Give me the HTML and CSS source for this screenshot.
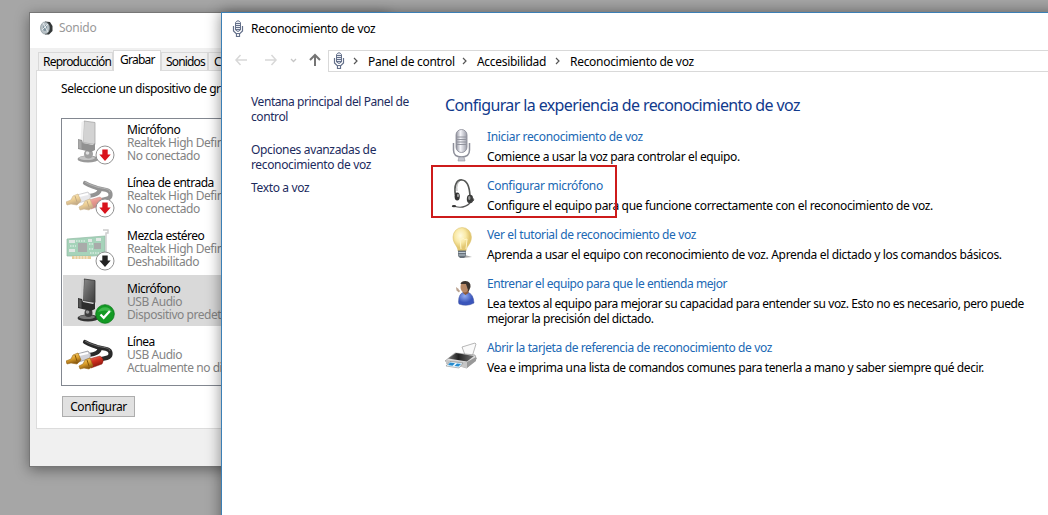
FILE: index.html
```html
<!DOCTYPE html>
<html lang="es">
<head>
<meta charset="utf-8">
<title>Reconocimiento de voz</title>
<link rel="stylesheet" href="styles.css">
</head>
<body>
<svg class="defs" aria-hidden="true">
  <defs>
    <linearGradient id="silver" x1="0" x2="1"><stop offset="0" stop-color="#8d8f9a"/><stop offset=".4" stop-color="#f5f5fa"/><stop offset="1" stop-color="#9b9da8"/></linearGradient>
    <linearGradient id="panel" x1="0" y1="0" x2="1" y2="1"><stop offset="0" stop-color="#8a8a8a"/><stop offset="1" stop-color="#3c3c3c"/></linearGradient>
    <linearGradient id="gold" x1="0" y1="0" x2=".4" y2="1"><stop offset="0" stop-color="#ffe48a"/><stop offset=".6" stop-color="#dda02b"/><stop offset="1" stop-color="#8a5a12"/></linearGradient>
    <linearGradient id="red" x1="0" y1="0" x2=".4" y2="1"><stop offset="0" stop-color="#f0806c"/><stop offset=".5" stop-color="#cf2f1f"/><stop offset="1" stop-color="#86150d"/></linearGradient>
    <radialGradient id="bulb" cx=".4" cy=".35"><stop offset="0" stop-color="#fffbe0"/><stop offset=".6" stop-color="#f9e9a6"/><stop offset="1" stop-color="#e3c872"/></radialGradient>
    <radialGradient id="shirt" cx=".4" cy=".3"><stop offset="0" stop-color="#93acef"/><stop offset="1" stop-color="#3a55bb"/></radialGradient>
    <linearGradient id="inktop" x1="0" y1="0" x2="1" y2="0"><stop offset="0" stop-color="#777"/><stop offset=".4" stop-color="#222"/><stop offset="1" stop-color="#777"/></linearGradient>
    <symbol id="mic" viewBox="0 0 56 51">
      <ellipse cx="22" cy="43" rx="10.500" ry="3.600" fill="#333"/><ellipse cx="21" cy="42" rx="8" ry="2" fill="#777"/>
      <circle cx="22.500" cy="38" r="4" fill="#3c3c3c"/><circle cx="21.500" cy="37" r="1.800" fill="#999"/>
      <path d="M18 4l11 1.500v22l-12-2z" fill="url(#panel)" stroke="#333" stroke-width=".8"/>
      <path d="M18 4l-2.500 1-1 21 2.500 1z" fill="#d0d0d0"/>
      <path d="M12 23l4 1 1 3 10 2 2-2v7l-4 2-13-3z" fill="#2c2c2c"/><path d="M12.500 24l3 1v8l-3-1z" fill="#555"/>
    </symbol>
    <symbol id="pale-mic" viewBox="0 0 56 51">
      <ellipse cx="22" cy="43" rx="10.500" ry="3.600" fill="#999"/><ellipse cx="21" cy="42" rx="8" ry="2" fill="#c4c4c4"/>
      <circle cx="22.500" cy="38" r="4.500" fill="#a0a0a0"/><circle cx="21.500" cy="37" r="1.800" fill="#e0e0e0"/>
      <path d="M18 5l11 1.500v22l-12-2z" fill="#d3d3d3" stroke="#a7a7a7" stroke-width=".8"/><path d="M18 5l-2.500 1-1 20 2.500 1z" fill="#f0f0f0"/>
      <path d="M12 23l4 1 1 3 10 2 2-2v7l-4 2-13-3z" fill="#919191"/><path d="M12.500 24l3 1v8l-3-1z" fill="#aaa"/>
    </symbol>
    <symbol id="rca" viewBox="0 0 56 51">
      <path d="M19 14c5 3 7 3 12 5 7 2 13 1 13.500 6 .5 5-4 5-9 6" fill="none" stroke="#292929" stroke-width="4.200" stroke-linecap="round"/>
      <path d="M34 20c-1 5-5 6-11 7" fill="none" stroke="#292929" stroke-width="4.200"/>
      <path d="M19 13c5 3 7 3 12 5 7 2 12 1 13 5" fill="none" stroke="#6a6a6a" stroke-width="1"/>
      <path d="M11 26l11-3q4 3 2 7l-11 4z" fill="#d2d2d8" stroke="#8c8c92" stroke-width=".7"/><path d="M13 27l9-2" stroke="#fff" stroke-width="2"/>
      <path d="M7 27l5-2 3 7-4 4-6-1-4 1-1-3 5-2z" fill="url(#gold)" stroke="#9b6818" stroke-width=".6"/>
      <path d="M23 31l11-3q5 3 2 8l-11 4z" fill="url(#red)" stroke="#8d1c12" stroke-width=".5"/>
      <path d="M19 32l5-2 3 8-4 3-5-1-4 1-1-3 4-2z" fill="url(#gold)" stroke="#9b6818" stroke-width=".6"/>
      <path d="M9 27l2 6M21 32l2 6" stroke="#865709" stroke-width="1"/>
    </symbol>
    <symbol id="card" viewBox="0 0 56 51">
      <path d="M1 17l38-3v19l-12 1H1z" fill="#50a878" stroke="#26754a" stroke-width=".7"/>
      <path d="M6 34h19v3H6z" fill="#d19c38"/><path d="M9 34v3m3-3v3m3-3v3m3-3v3m3-3v3" stroke="#fff" stroke-width=".7"/>
      <path d="M12 21h9v9h-9zM28 21h7v6h-7z" fill="#555a58"/><path d="M3 18h6v3H3zM22 17h4v3h-4zM30 16h5v3h-5zM3 27h6v3H3z" fill="#c4d0ca"/>
      <path d="M4 24h6m13-2h4m-4 5h4M10 19h9m5 12h12" stroke="#e0f5ea" stroke-width="1" stroke-dasharray="1.500 1"/>
      <path d="M37 8h5v3h-2v22" fill="none" stroke="#999" stroke-width="1.400"/>
    </symbol>
    <symbol id="arrow-badge" viewBox="0 0 20 20">
      <circle cx="10" cy="10" r="9" fill="#fff" stroke="#929292" stroke-width="1"/>
      <path d="M7.300 4.500h5.400v5h3L10 16 4.300 9.500h3z" fill="currentColor"/>
    </symbol>
    <symbol id="ok-badge" viewBox="0 0 20 20">
      <circle cx="10" cy="10" r="9.300" fill="#139a24" stroke="#0c7a1a" stroke-width=".8"/><path d="M3 8a7.500 7.500 0 0 1 14 0q-7-3-14 0" fill="#3eb84b"/>
      <path d="M5.500 10.500l3.200 3.300 6.200-6.800" fill="none" stroke="#fff" stroke-width="2.300"/>
    </symbol>
    <symbol id="mini-mic" viewBox="0 0 12 18">
      <path d="M3.500 2.500q2.500-3.500 5 0v7.500q-2.500 3-5 0z" fill="#e8ebf2" stroke="#64708a"/>
      <path d="M3.500 3.500h5m-5 2h5m-5 2h5m-5 2h5" stroke="#64708a"/>
      <path d="M1.500 6v5l2.500 2.500h4l2.500-2.500V6M4.500 14v2.500h3V14" fill="none" stroke="#64708a" stroke-width="1.200"/>
    </symbol>
  </defs>
</svg>

<section class="window sound">
  <header class="sound-title">
    <svg width="14" height="16" viewBox="0 0 14 16"><path d="M5 1.500l5 .5 2.500 4v5L9 14.500H5z" fill="#343838"/><ellipse cx="5" cy="8" rx="4.500" ry="6" fill="#b8c1c6" stroke="#88959b" stroke-width=".7"/><ellipse cx="5" cy="8" rx="2" ry="3" fill="#8095a0"/><path d="M3 3l5 9M2 10l6-6" stroke="#e4eaed"/></svg>
    <span>Sonido</span>
  </header>
  <nav class="tabs"><span class="tab t1">Reproducción</span><span class="tab active">Grabar</span><span class="tab t3">Sonidos</span><span class="tab t4">Comunicaciones</span></nav>
  <div class="tab-page">
    <p class="prompt">Seleccione un dispositivo de grabación</p>
    <ul class="devices">
      <li><div class="device-icon"><svg class="picture"><use href="#pale-mic"/></svg><svg class="badge down"><use href="#arrow-badge"/></svg></div><div><b>Micrófono</b><span>Realtek High Definition</span><span>No conectado</span></div></li>
      <li><div class="device-icon"><svg class="picture faded"><use href="#rca"/></svg><svg class="badge down"><use href="#arrow-badge"/></svg></div><div><b>Línea de entrada</b><span>Realtek High Definition</span><span>No conectado</span></div></li>
      <li><div class="device-icon"><svg class="picture faded"><use href="#card"/></svg><svg class="badge off"><use href="#arrow-badge"/></svg></div><div><b>Mezcla estéreo</b><span>Realtek High Definition</span><span>Deshabilitado</span></div></li>
      <li class="selected"><div class="device-icon"><svg class="picture"><use href="#mic"/></svg><svg class="badge"><use href="#ok-badge"/></svg></div><div><b>Micrófono</b><span>USB Audio</span><span>Dispositivo predeterminado</span></div></li>
      <li><div class="device-icon"><svg class="picture"><use href="#rca"/></svg></div><div><b>Línea</b><span>USB Audio</span><span>Actualmente no disponible</span></div></li>
    </ul>
    <button class="configure">Configurar</button>
  </div>
</section>

<section class="window speech">
  <header class="speech-title"><svg width="12" height="18"><use href="#mini-mic"/></svg><span>Reconocimiento de voz</span></header>
  <div class="toolbar">
    <svg class="nav" viewBox="0 0 90 20" fill="none"><path d="M13 10H2m4.500-5L2 10l4.500 5M31 10h11m-4.500-5l4.500 5-4.500 5" stroke="#d8d8d8" stroke-width="1.500"/><path d="M57 9l2.500 2.500L62 9" stroke="#c6c6c6" stroke-width="1.300"/><path d="M81 16V5m-5 5l5-5 5 5" stroke="#757575" stroke-width="2"/></svg>
    <div class="address">
      <svg width="12" height="18"><use href="#mini-mic"/></svg>
      <svg class="chev c0" viewBox="0 0 5 8"><path d="M1 1l3 3-3 3"/></svg><span class="a1">Panel de control</span>
      <svg class="chev" viewBox="0 0 5 8"><path d="M1 1l3 3-3 3"/></svg><span class="a2">Accesibilidad</span>
      <svg class="chev" viewBox="0 0 5 8"><path d="M1 1l3 3-3 3"/></svg><span class="a3">Reconocimiento de voz</span>
    </div>
  </div>
  <div class="content">
    <aside><a>Ventana principal del Panel de<br>control</a><a>Opciones avanzadas de<br>reconocimiento de voz</a><a>Texto a voz</a></aside>
    <main>
      <h1>Configurar la experiencia de reconocimiento de voz</h1>
      <article class="start">
        <svg viewBox="0 0 34 38"><path d="M8.500 17v7q0 7 8 7t8-7v-7M16.500 31v4" fill="none" stroke="#8e909b" stroke-width="1.500"/><path d="M14 31h5l1 4h-7z" fill="#c4c6cf" stroke="#8e909b" stroke-width=".6"/><rect x="11" y="3.500" width="11" height="23" rx="5.500" fill="url(#silver)" stroke="#858793" stroke-width=".8"/><path d="M11.500 11h10M11.500 13.500h10M11.500 16h10M11.500 18.500h10" stroke="#92949e"/></svg>
        <div><a>Iniciar reconocimiento de voz</a><p>Comience a usar la voz para controlar el equipo.</p></div>
      </article>
      <article class="setup">
        <svg viewBox="0 0 34 38"><path d="M10.500 20C8.500 10 12 4.500 17 5c5.500.5 7.500 7 8 16" fill="none" stroke="#555755" stroke-width="1.700"/><path d="M12 16q-1-8 3-10" fill="none" stroke="#999" stroke-width=".8"/><ellipse cx="12.200" cy="21.500" rx="2.600" ry="4" fill="#333"/><ellipse cx="13" cy="20.500" rx="1" ry="1.700" fill="#a4a4a4"/><ellipse cx="25" cy="24" rx="3.200" ry="4.300" fill="#3a3b3a"/><ellipse cx="24.300" cy="23" rx="1.200" ry="2" fill="#999"/><path d="M27 22l2 3-3 2.500" fill="none" stroke="#555"/><path d="M25 28q-6 6-15 3.500" fill="none" stroke="#555" stroke-width="1.200"/><ellipse cx="9" cy="31.200" rx="2.200" ry="1.100" fill="#333"/></svg>
        <div><a>Configurar micrófono</a><p>Configure el equipo para que funcione correctamente con el reconocimiento de voz.</p></div>
      </article>
      <article class="tutorial">
        <svg viewBox="0 0 34 38"><path d="M18 34l9-1-7-2z" fill="#aaa"/><path d="M13 27c0-5-5-7-5-14a9.200 9.500 0 0 1 18.400 0c0 7-5 9-5.400 14z" fill="url(#bulb)" stroke="#d9bc63" stroke-width=".5"/><path d="M16 25l-1-10q2 2 3-1 1 3 4 1l-1 10" fill="none" stroke="#fff6c9" stroke-width="1"/><path d="M13 26.500h8V32l-2 2h-4l-2-2z" fill="#68727b"/><path d="M13.500 28.500h7m-7 2.500h7" stroke="#bfcbd4"/></svg>
        <div><a>Ver el tutorial de reconocimiento de voz</a><p>Aprenda a usar el equipo con reconocimiento de voz. Aprenda el dictado y los comandos básicos.</p></div>
      </article>
      <article class="train">
        <svg viewBox="0 0 34 38"><path d="M13.500 29q0-9 6-10h3q6 2 6.500 11-7 4-15 1z" fill="url(#shirt)" stroke="#3c50a0" stroke-width=".5"/><path d="M18 17h5.500v3l-3 2-2.500-2z" fill="#8e5b3b"/><ellipse cx="19.500" cy="14" rx="4" ry="5.500" fill="#b88967"/><path d="M15.500 11q.5-3 5-3 5.500.5 5 6l-2 5-1.500-5-1-3z" fill="#3b332e"/><path d="M11 14l2 1.500 2 2.500-1 1.500-2.500-2z" fill="#b9a18e"/></svg>
        <div><a>Entrenar el equipo para que le entienda mejor</a><p>Lea textos al equipo para mejorar su capacidad para entender su voz. Esto no es necesario, pero puede<br>mejorar la precisión del dictado.</p></div>
      </article>
      <article class="card">
        <svg viewBox="0 0 34 38"><path d="M20 18l-3-8 13-4 1 1-4 13z" fill="#fafafa" stroke="#999" stroke-width=".7"/><path d="M0 24l10-8 20 2 1.500 4-10 9z" fill="#ddd" stroke="#888" stroke-width=".6"/><path d="M3 21.500l8-5.500 18 3-7 5.500z" fill="url(#inktop)"/><path d="M1 23l21 2v6L1 27z" fill="#c6c6c6"/><path d="M22 25l9-5v4l-9 7z" fill="#999"/><path d="M5 24.500l13 1.500-4 5-13-2z" fill="#e8f7ff" stroke="#777" stroke-width=".5"/><path d="M5 25.500l5 .8-2.500 2.500-4.500-.8zM12 26.500l4 .6-2.500 2.400-4-.5z" fill="#258bce"/></svg>
        <div><a>Abrir la tarjeta de referencia de reconocimiento de voz</a><p>Vea e imprima una lista de comandos comunes para tenerla a mano y saber siempre qué decir.</p></div>
      </article>
    </main>
  </div>
  <div class="highlight"></div>
</section>
</body>
</html>
```
FILE: styles.css
```css
* { box-sizing: border-box; }
body { margin: 0; width: 1048px; height: 515px; overflow: hidden; position: relative; background: #a6a6a6; font: 12px/15px "Noto Sans", "Open Sans", sans-serif; color: #000; letter-spacing: -.27px; }
svg { display: block; flex: none; }
p, h1, ul { margin: 0; padding: 0; }
.defs { position: absolute; width: 0; height: 0; }
.window { position: absolute; overflow: hidden; white-space: nowrap; }

.sound { left: 29px; top: 12px; width: 360px; height: 455px; border: 1px solid #777; background: #f0f0f0; box-shadow: 0 3px 13px rgba(0,0,0,.4); }
.sound-title { height: 35px; background: #fff; display: flex; align-items: center; padding: 0 0 6px 10px; gap: 5px; color: #999; }
.tabs { display: flex; align-items: flex-end; height: 22px; padding-left: 8px; letter-spacing: -.45px; }
.tab { height: 18px; border: 1px solid #d9d9d9; border-bottom: 0; background: #f0f0f0; padding-left: 4px; line-height: 18px; }
.t1 { width: 75px; letter-spacing: -.8px; }
.active { width: 48px; height: 21px; background: #fff; padding-left: 6px; line-height: 18px; margin-bottom: -1px; z-index: 1; letter-spacing: -.75px; }
.t3 { width: 47px; padding-left: 4px; letter-spacing: -.85px; }
.t4 { width: 120px; padding-left: 5px; }
.tab-page { margin-left: 6px; height: 359px; border: 1px solid #dcdcdc; background: #fff; padding: 10px 0 0 24px; }
.prompt { height: 37px; line-height: 15px; letter-spacing: -.45px; }
.devices { list-style: none; width: 300px; height: 268px; border: 1px solid #828790; overflow: hidden; }
.devices li { display: flex; height: 51px; margin: 0 0 2px 1px; padding-left: 3px; gap: 8px; }
.devices li:first-child { margin-top: -3px; }
.devices li > div:last-child { padding-top: 7px; }
.devices b, .devices span { display: block; height: 13px; line-height: 13px; font-weight: 400; }
.devices b { letter-spacing: -.5px; }
.devices span { color: #838383; letter-spacing: -.45px; }
.devices .selected { background: #d9d9d9; }
.device-icon { position: relative; width: 53px; height: 51px; }
.picture { width: 56px; height: 51px; }
.faded { opacity: .5; }
.badge { position: absolute; left: 29px; top: 29px; width: 20px; height: 20px; }
.down { color: #d9131c; }
.off { color: #222; }
.configure { display: block; margin-top: 10px; margin-left: 1px; width: 73px; height: 21px; padding: 0; border: 1px solid #adadad; background: #e1e1e1; font: inherit; letter-spacing: -.4px; color: #000; }

.speech { left: 221px; top: 12px; width: 840px; height: 520px; border: 1px solid #3b7fb5; background: #fff; box-shadow: 0 0 14px rgba(0,0,0,.45); }
.speech-title { display: flex; align-items: center; height: 32px; padding: 0 0 1px 10px; gap: 7px; }
.toolbar { display: flex; padding: 5px 0 0 12px; gap: 4px; }
.nav { width: 90px; height: 20px; }
.address { display: flex; align-items: center; width: 760px; height: 22px; border: 1px solid #d9d9d9; padding-left: 4px; letter-spacing: -.3px; }
.chev { width: 5px; height: 8px; margin-right: 10px; fill: none; stroke: #555; stroke-width: 1.200; }
.c0 { margin-left: 8px; }
.a1 { width: 94px; }
.a2 { width: 78px; }
.content { display: flex; padding: 22px 0 0 29px; }
aside { width: 194px; color: #1c2b5e; letter-spacing: -.42px; }
aside a { display: block; margin-bottom: 18px; }
aside a + a { margin-bottom: 8px; letter-spacing: -.35px; }
h1 { height: 33px; font-size: 16px; line-height: 22px; font-weight: 400; color: #113a8c; letter-spacing: -.62px; }
article { display: flex; gap: 8px; margin-bottom: 12px; }
article > svg { width: 34px; height: 38px; margin: -1px 0 -2px; }
article a { display: block; height: 20px; line-height: 20px; color: #2068b4; margin-bottom: 2px; }
.start a { letter-spacing: -.34px; }
.start p { letter-spacing: -.37px; }
.setup a { letter-spacing: -.3px; }
.setup p { letter-spacing: -.335px; }
.tutorial a { letter-spacing: -.37px; }
.tutorial p { letter-spacing: -.335px; }
.train a { letter-spacing: -.45px; }
.train p { letter-spacing: -.43px; }
.card a { letter-spacing: -.385px; }
.card p { letter-spacing: -.405px; }
.highlight { position: absolute; left: 209px; top: 152px; width: 186px; height: 53px; border: 2px solid #cd1b1b; }
```
